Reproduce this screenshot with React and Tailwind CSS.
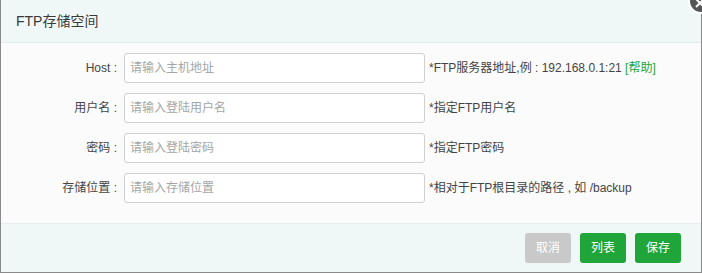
import React from "react";

const rows = [
  { label: "Host", placeholder: "请输入主机地址", hint: "*FTP服务器地址,例 : 192.168.0.1:21", help: true },
  { label: "用户名", placeholder: "请输入登陆用户名", hint: "*指定FTP用户名" },
  { label: "密码", placeholder: "请输入登陆密码", hint: "*指定FTP密码" },
  { label: "存储位置", placeholder: "请输入存储位置", hint: "*相对于FTP根目录的路径 , 如 /backup" },
];

export default function App() {
  return (
    <div
      className="relative w-[702px] h-[274px] overflow-hidden bg-white"
      style={{ fontFamily: '"Liberation Sans", "Noto Sans CJK SC", sans-serif' }}
    >
      <div className="flex flex-col h-[273px] border-l border-r border-b border-[#8a8a8a] bg-[#fbfbfb]">
        {/* Header */}
        <div className="h-[43px] shrink-0 flex items-center px-[15px] bg-[#f0f7f7] border-b border-[#e3eded] text-[14px] text-[#3a3a3a]">
          FTP存储空间
        </div>

        {/* Form rows */}
        <div className="flex-1 flex flex-col gap-[10px] pt-[10px]">
          {rows.map((row) => (
            <div key={row.label} className="flex items-center h-[30px]">
              <label className="w-[120px] text-right text-[12px] text-[#444] pr-[4px] whitespace-pre">
                {row.label} :
              </label>
              <input
                type="text"
                placeholder={row.placeholder}
                className="ml-[3px] w-[301px] h-[30px] px-[5px] text-[12px] bg-white border border-[#cfcfcf] rounded-[3px] outline-none placeholder:text-[#a5a5a5]"
              />
              <span className="ml-[4px] text-[12px] text-[#444] whitespace-pre">
                {row.hint}
                {row.help && <span className="text-[#20a53a]"> [帮助]</span>}
              </span>
            </div>
          ))}
        </div>

        {/* Footer */}
        <div className="h-[49px] shrink-0 flex items-center justify-end gap-[9px] pr-[20px] bg-[#f0f7f7] border-t border-[#e6efef]">
          <button className="w-[46px] h-[30px] rounded-[3px] bg-[#c9c9c9] text-white text-[12px]">取消</button>
          <button className="w-[46px] h-[30px] rounded-[3px] bg-[#20a53a] text-white text-[12px]">列表</button>
          <button className="w-[46px] h-[30px] rounded-[3px] bg-[#20a53a] text-white text-[12px]">保存</button>
        </div>
      </div>

      {/* Close button */}
      <div className="absolute -top-[12px] -right-[12px] w-[26px] h-[26px] rounded-full bg-[#555] border-2 border-white flex items-center justify-center">
        <svg width="12" height="12" viewBox="0 0 12 12" className="-ml-[2px] mt-[4px]">
          <path d="M2 2 L10 10 M10 2 L2 10" stroke="white" strokeWidth="2" />
        </svg>
      </div>
    </div>
  );
}
